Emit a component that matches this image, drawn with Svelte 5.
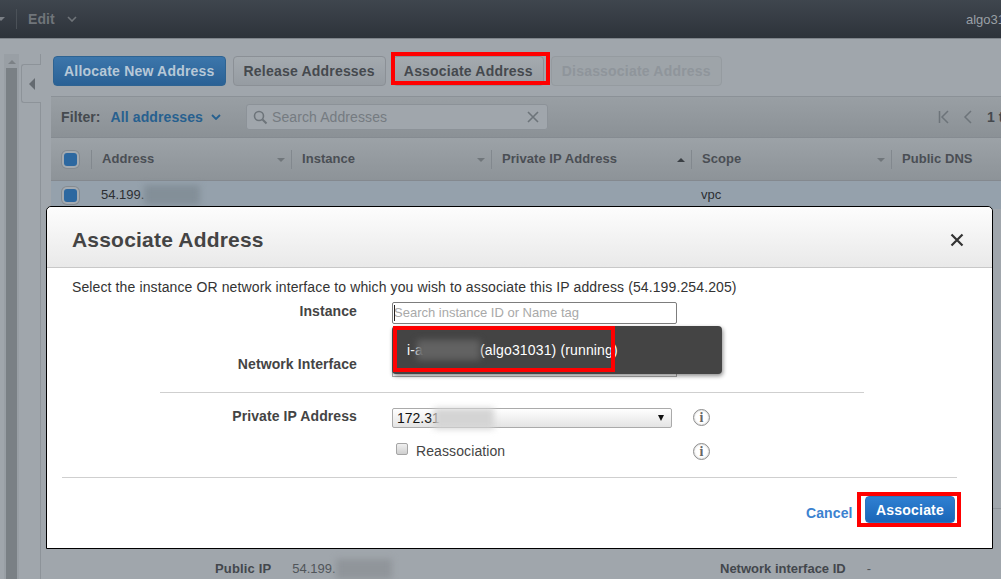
<script>
  const cols = [
    { name: 'Address', w: 200, arrow: 'down' },
    { name: 'Instance', w: 200, arrow: 'down' },
    { name: 'Private IP Address', w: 200, arrow: 'up' },
    { name: 'Scope', w: 200, arrow: 'down' },
    { name: 'Public DNS', w: 120, arrow: '' }
  ];
</script>

<div class="page">
  <header class="topbar">
    <span class="caret first"></span>
    <span class="topsep"></span>
    <span class="edit">Edit</span>
    <svg class="editcaret" width="10" height="6" viewBox="0 0 10 6"><path d="M1 1l4 4 4-4" fill="none" stroke="#6f7479" stroke-width="1.6"/></svg>
    <span class="user">algo31031</span>
  </header>

  <div class="body">
    <aside class="rail">
      <div class="scroll">
        <span class="scrollup"></span>
        <span class="thumb"></span>
      </div>
      <div class="railline">
        <div class="tab"><span class="tabarrow"></span></div>
      </div>
    </aside>

    <main class="main">
      <div class="toolbar">
        <button class="btn primary">Allocate New Address</button>
        <button class="btn">Release Addresses</button>
        <button class="btn">Associate Address</button>
        <button class="btn disabled">Disassociate Address</button>
      </div>

      <div class="filterbar">
        <span class="flabel">Filter:</span>
        <span class="fvalue">All addresses</span>
        <svg class="fcaret" width="10" height="6" viewBox="0 0 10 6"><path d="M1 1l4 4 4-4" fill="none" stroke="#27608f" stroke-width="1.8"/></svg>
        <div class="search">
          <svg width="15" height="15" viewBox="0 0 15 15"><circle cx="6" cy="6" r="4.5" fill="none" stroke="#6d747a" stroke-width="1.6"/><path d="M9.5 9.5l4 4" stroke="#6d747a" stroke-width="2"/></svg>
          <span class="ph">Search Addresses</span>
          <svg class="clear" width="12" height="12" viewBox="0 0 12 12"><path d="M1 1l10 10M11 1L1 11" stroke="#6d747a" stroke-width="1.6"/></svg>
        </div>
        <div class="pager">
          <svg width="12" height="14" viewBox="0 0 12 14"><path d="M1.5 1v12M10 1L4 7l6 6" fill="none" stroke="#6d747a" stroke-width="1.5"/></svg>
          <svg width="9" height="14" viewBox="0 0 9 14"><path d="M8 1L2 7l6 6" fill="none" stroke="#6d747a" stroke-width="1.5"/></svg>
          <b>1 to 1</b>
        </div>
      </div>

      <div class="thead">
        <div class="checkcell"><span class="check"></span></div>
        {#each cols as c}
          <div class="th" style="width:{c.w}px">
            <span>{c.name}</span>
            {#if c.arrow}<i class={c.arrow}></i>{/if}
          </div>
        {/each}
      </div>

      <div class="row">
        <div class="checkcell"><span class="check"></span></div>
        <div class="td addr">54.199.<span class="blur dim"></span></div>
        <div class="td scope">vpc</div>
      </div>

      <div class="details">
        <div class="dleft"><b>Public IP</b><span>54.199.<span class="blur dim2"></span></span></div>
        <div class="dright"><b>Network interface ID</b><span>-</span></div>
      </div>
    </main>
  </div>

  <div class="modal">
    <div class="mhead">
      <h2>Associate Address</h2>
      <svg width="14" height="14" viewBox="0 0 14 14"><path d="M1.5 1.5l11 11M12.5 1.5l-11 11" stroke="#333" stroke-width="2.2"/></svg>
    </div>
    <div class="mbody">
      <p>Select the instance OR network interface to which you wish to associate this IP address (54.199.254.205)</p>

      <div class="form">
        <div class="frow inst">
          <label>Instance</label>
          <div class="field">
            <div class="textinput"><span class="cursor"></span>Search instance ID or Name tag</div>
          </div>
        </div>
        <div class="frow net">
          <label>Network Interface</label>
          <div class="field"><div class="netinput"></div></div>
        </div>
        <hr class="rule" />
        <div class="frow priv">
          <label>Private IP Address</label>
          <div class="select">
            <span>172.31</span><span class="blur light"></span>
            <i class="selarrow"></i>
          </div>
          <span class="info">i</span>
        </div>
        <div class="frow reas">
          <span class="cb"></span>
          <span class="cblabel">Reassociation</span>
          <span class="info">i</span>
        </div>
      </div>
    </div>
    <div class="mfoot">
      <a href="#cancel">Cancel</a>
      <button class="assoc">Associate</button>
    </div>

    <div class="dropdown">
      <span>i-a</span><span class="blur darkb"></span><span>(algo31031) (running)</span>
    </div>
    <span class="mark m2"></span>
    <span class="mark m3"></span>
  </div>

  <span class="mark m1"></span>
</div>

<style>
  :global(body) { margin: 0; background: #a0a6ac; }
  .page {
    position: relative; width: 1001px; height: 579px; overflow: hidden;
    font-family: "Liberation Sans", Arial, sans-serif; font-size: 13px; color: #333;
  }
  .topbar {
    height: 39px; box-sizing: border-box; border-bottom: 1px solid #7e848a;
    background: linear-gradient(#3f464e, #2d333a);
    display: flex; align-items: center; position: relative;
  }
  .caret.first {
    width: 0; height: 0; margin-left: -3px;
    border: 4px solid transparent; border-top: 4px solid #7a7f85; border-bottom: 0;
  }
  .topsep { width: 1px; height: 20px; background: #4b5158; margin-left: 11px; }
  .edit { margin-left: 11px; font-weight: 700; font-size: 14px; color: #70757a; letter-spacing: 0.1px; }
  .editcaret { margin-left: 12px; }
  .user { position: absolute; left: 966px; font-size: 13px; color: #9aa0a6; white-space: nowrap; }

  .body { display: flex; height: 540px; }
  .rail { width: 51px; flex: none; display: flex; position: relative; padding-top: 15px; box-sizing: border-box; }
  .scroll {
    width: 15px; margin-left: 4px; background: #999fa5;
    display: flex; flex-direction: column; align-items: center;
  }
  .scrollup {
    width: 0; height: 0; margin: 6px 0 4px;
    border: 4px solid transparent; border-bottom: 4px solid #7c8186; border-top: 0;
  }
  .thumb { flex: 1; width: 11px; background: #7a8085; }
  .railline { position: absolute; left: 20px; top: 15px; bottom: 0; width: 20px; border-right: 1px solid #8d9399; }
  .tab {
    position: absolute; top: 10px; left: 1px; width: 20px; height: 39px;
    background: #a0a6ac; border: 1px solid #8d9399; border-right: 0;
    border-radius: 3px 0 0 3px; box-sizing: border-box;
    display: flex; align-items: center; justify-content: center;
  }
  .tabarrow {
    width: 0; height: 0; border: 6px solid transparent; border-right: 6px solid #646a70; border-left: 0;
  }

  .main { flex: 1; min-width: 0; }
  .toolbar { display: flex; gap: 7px; padding: 17px 0 0 2px; height: 58px; box-sizing: border-box; border-bottom: 1px solid #8b9197; }
  .btn {
    height: 30px; padding: 0 10px; box-sizing: border-box; border: 1px solid #8b9096; border-radius: 4px;
    background: linear-gradient(#a4aaaf, #969ca2); letter-spacing: 0.2px;
    font-family: "Liberation Sans", Arial, sans-serif; font-weight: 700; font-size: 14px; color: #45494e; white-space: nowrap;
  }
  .btn.primary {
    background: linear-gradient(#3c76ab, #2a6195); border-color: #2e6392; color: #b7c8d7;
  }
  .btn.disabled { color: #8f959b; background: #9ea4a9; border-color: #959ba0; }

  .filterbar {
    height: 41px; box-sizing: border-box; border-bottom: 1px solid #858b91;
    background: linear-gradient(#999fa4, #8b9196);
    display: flex; align-items: center; padding-left: 10px; white-space: nowrap;
  }
  .flabel { font-weight: 700; font-size: 14px; color: #454a4f; letter-spacing: 0.1px; }
  .fvalue { font-weight: 700; font-size: 14px; color: #27608f; margin-left: 10px; letter-spacing: 0.1px; }
  .fcaret { margin-left: 8px; flex: none; }
  .search {
    margin-left: 25px; width: 302px; height: 26px; box-sizing: border-box; flex: none;
    border: 1px solid #8c9298; border-radius: 3px; background: #a0a6ac;
    display: flex; align-items: center; padding-left: 6px; gap: 4px;
  }
  .ph { font-size: 14px; color: #757b81; flex: 1; letter-spacing: 0.1px; }
  .clear { margin-right: 8px; }
  .pager { margin-left: 390px; display: flex; align-items: center; gap: 13px; white-space: nowrap; }
  .pager svg { flex: none; }
  .pager b { font-size: 14px; color: #45494e; margin-left: 2px; }

  .thead {
    height: 43px; box-sizing: border-box; display: flex; align-items: center; border-bottom: 1px solid #84898f;
    background: linear-gradient(#9ca2a7, #8d9398); white-space: nowrap;
  }
  .checkcell { width: 40px; flex: none; display: flex; align-items: center; padding-left: 13px; box-sizing: border-box; }
  .check {
    width: 13px; height: 13px; background: #2d68a0; border-radius: 3px; box-shadow: 0 0 0 2px #a4aab0, 0 0 0 3px #858b91;
  }
  .th {
    flex: none; height: 19px; box-sizing: border-box; border-left: 1px solid #82888e;
    padding: 0 0 2px 10px; display: flex; align-items: center; position: relative;
    font-weight: 700; font-size: 13px; color: #4a4e54; letter-spacing: 0.05px;
  }
  .th i { position: absolute; left: 185px; top: 8px; width: 0; height: 0; border: 4px solid transparent; }
  .th i.down { border-top: 4px solid #70767b; border-bottom: 0; }
  .th i.up { border-bottom: 4px solid #3a3f44; border-top: 0; }

  .row { height: 28px; background: #95a1ac; display: flex; align-items: center; white-space: nowrap; }
  .td { font-size: 13px; color: #2c2f33; display: flex; align-items: center; padding-bottom: 1px; }
  .addr { margin-left: 10px; width: 600px; }
  .blur { display: inline-block; filter: blur(3px); }
  .dim { width: 56px; height: 20px; background: #838f98; }

  .details {
    margin-top: 299px; border-top: 1px solid #8d9399; padding: 52px 0 0 164px;
    display: flex; white-space: nowrap;
  }
  .details b { color: #43474c; font-size: 13px; }
  .dleft { display: flex; gap: 21px; width: 505px; }
  .dleft b { letter-spacing: 0.15px; }
  .dleft span { color: #50555a; display: flex; }
  .dim2 { width: 56px; height: 20px; background: #90959a; margin-top: -2px; }
  .dright { display: flex; gap: 21px; color: #50555a; }

  .modal {
    position: absolute; left: 46px; top: 206px; width: 947px; height: 343px;
    background: #fff; border: 1px solid #000; border-radius: 5px 5px 0 0;
    box-sizing: border-box;
  }
  .mhead {
    height: 61px; box-sizing: border-box; border-bottom: 1px solid #c8c8c8;
    background: linear-gradient(#fdfdfd, #e9e9e9); border-radius: 5px 5px 0 0;
    display: flex; align-items: center; justify-content: space-between; padding: 5px 28px 0 25px;
  }
  .mhead h2 { margin: 0; font-size: 21px; font-weight: 700; color: #444; letter-spacing: 0.2px; }
  .mbody { padding: 10px 0 0 25px; position: relative; }
  .mbody p { margin: 0; font-size: 14px; line-height: 18px; color: #333; white-space: nowrap; letter-spacing: 0.115px; }
  .form { position: relative; }
  .frow { display: flex; align-items: flex-start; }
  .frow label {
    width: 285px; margin-right: 35px; text-align: right; font-weight: 700; font-size: 14px; line-height: 16px;
    color: #444; flex: none; white-space: nowrap; letter-spacing: 0.1px;
  }
  .frow.inst { margin-top: 7px; height: 53px; }
  .textinput {
    width: 285px; height: 22px; box-sizing: border-box; border: 1px solid #7d7d7d; border-radius: 2px;
    font-size: 13px; color: #a9a9a9; line-height: 20px; padding-left: 1px; position: relative; margin-top: -1px; white-space: nowrap;
  }
  .cursor { position: absolute; left: 1px; top: 2px; width: 1px; height: 16px; background: #222; }
  .frow.net { height: 36px; }
  .netinput { width: 285px; height: 6px; margin-top: 15px; border: 1px solid #aaa; box-sizing: border-box; }
  .rule { border: 0; height: 1px; background: #cfcfcf; margin: 0 0 0 88px; width: 704px; }
  .frow.priv { margin-top: 15px; height: 33px; }
  .select {
    width: 280px; height: 20px; box-sizing: border-box; border: 1px solid #aaa; border-radius: 2px;
    background: linear-gradient(#fff, #e4e4e4); display: flex; align-items: center; padding-left: 4px;
    font-size: 14px; color: #111; position: relative;
  }
  .light { width: 60px; height: 21px; background: #d4d4d4; margin-left: -6px; }
  .selarrow { position: absolute; right: 7px; top: 6px; width: 0; height: 0; border: 3.5px solid transparent; border-top: 6px solid #111; border-bottom: 0; }
  .info {
    width: 17px; height: 17px; border: 1px solid #8c8c8c; border-radius: 50%; box-sizing: border-box;
    display: flex; align-items: center; justify-content: center; flex: none;
    font: 700 14px "Liberation Serif", serif; color: #666; margin-left: 21px; margin-top: 1px;
    box-shadow: inset 0 0 2px #bbb;
  }
  .frow.reas { height: 28px; padding-left: 324px; }
  .cb { width: 12px; height: 12px; flex: none; box-sizing: border-box; border: 1px solid #a5a5a5; border-radius: 2px; background: linear-gradient(#f0f0f0, #cfcfcf); margin-top: 2px; }
  .cblabel { margin-left: 8px; margin-top: 2px; font-size: 14px; line-height: 16px; color: #444; width: 277px; flex: none; letter-spacing: 0.1px; }
  .reas .info { margin-left: 0; margin-top: 2px; }
  .mfoot {
    position: absolute; left: 15px; top: 270px; width: 895px; height: 60px; box-sizing: border-box; border-top: 1px solid #cfcfcf;
  }
  .mfoot a { position: absolute; left: 744px; top: 27px; font-weight: 700; font-size: 14px; color: #3b82d0; text-decoration: none; letter-spacing: 0.1px; }
  .assoc {
    position: absolute; left: 803px; top: 18px; width: 90px; height: 27px; border: 1px solid #2d74bd; border-radius: 4px;
    background: linear-gradient(#2f80d2, #1a66b8); color: #fff; font-family: "Liberation Sans", Arial, sans-serif; font-weight: 700; font-size: 14px; letter-spacing: 0.2px; padding: 0;
  }
  .dropdown {
    position: absolute; left: 345px; top: 119px; width: 330px; height: 48px; box-sizing: border-box;
    background: #444; border-radius: 4px; box-shadow: 1px 2px 4px rgba(0,0,0,.45);
    display: flex; align-items: center; padding-left: 15px; color: #fff; font-size: 14px; white-space: nowrap; letter-spacing: 0.15px;
  }
  .darkb { width: 63px; height: 20px; background: #626262; margin-left: -6px; }
  .mark { position: absolute; border: 4px solid #f00; box-sizing: border-box; pointer-events: none; }
  .m1 { left: 391px; top: 52px; width: 159px; height: 33px; }
  .m2 { left: 346px; top: 119px; width: 222px; height: 46px; }
  .m3 { left: 810px; top: 285px; width: 104px; height: 35px; }
</style>
